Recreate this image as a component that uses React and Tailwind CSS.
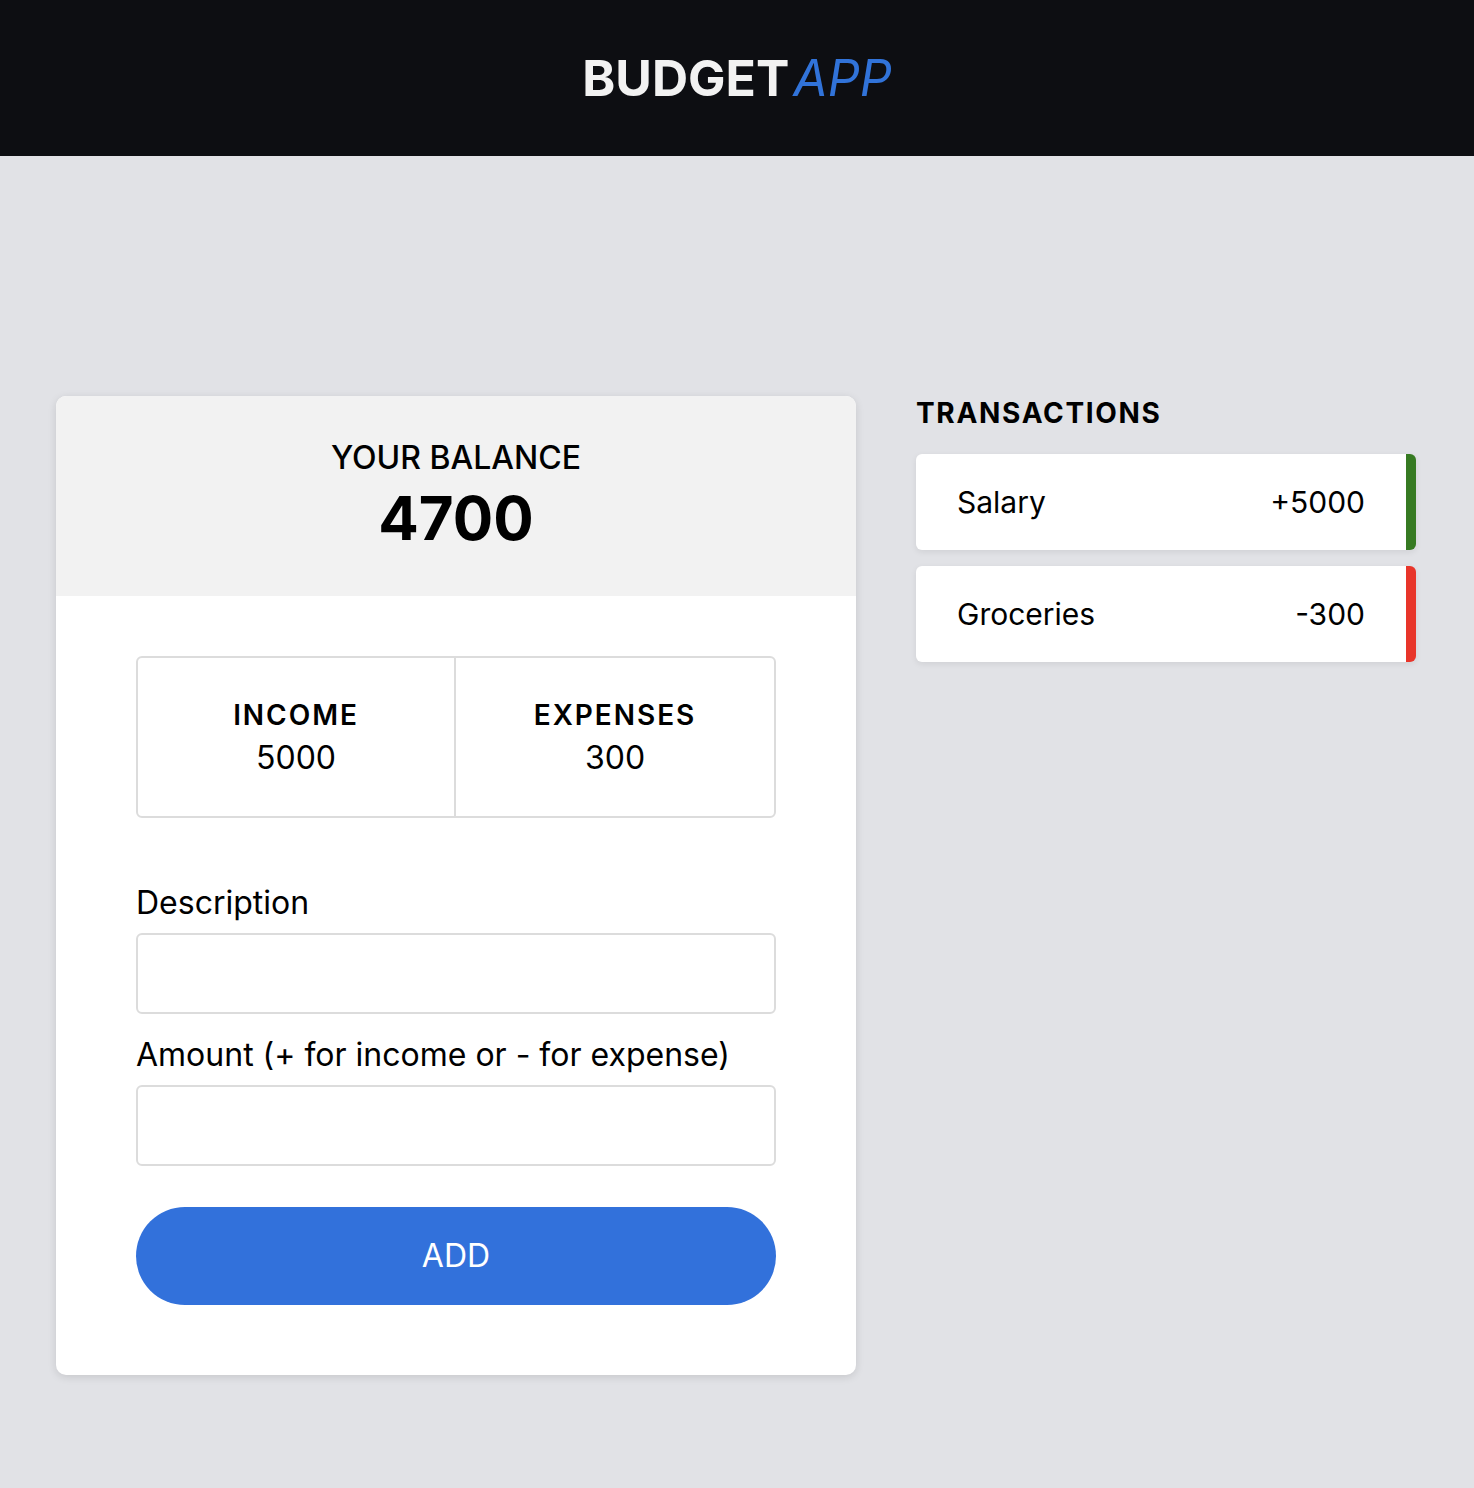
import React from "react";

const transactions = [
  { id: 1, text: "Salary", amount: 5000 },
  { id: 2, text: "Groceries", amount: -300 },
];

export default function App() {
  const income = transactions.filter((t) => t.amount > 0).reduce((s, t) => s + t.amount, 0);
  const expense = transactions.filter((t) => t.amount < 0).reduce((s, t) => s - t.amount, 0);

  return (
    <div className="min-h-[1488px] bg-[#e1e2e6] text-black font-['Inter',sans-serif]">
      {/* Header */}
      <header className="h-[156px] bg-[#0d0e12] flex items-center justify-center">
        <h1 className="text-[50px] leading-none font-bold text-[#f2f2f2]">
          BUDGET<span className="ml-[4px] italic font-normal text-[#3173d9]">APP</span>
        </h1>
      </header>

      <main className="pl-[56px] pt-[240px] flex gap-[60px] items-start">
        {/* Balance card */}
        <div className="w-[800px] rounded-[10px] bg-white overflow-hidden shadow-[0_2px_8px_rgba(0,0,0,0.12)]">
          <div className="h-[200px] bg-[#f2f2f2] pt-[43px] text-center">
            <h2 className="text-[32px] leading-[38px] font-medium">YOUR BALANCE</h2>
            <p className="mt-[11px] text-[60px] leading-[60px] font-bold">{income - expense}</p>
          </div>

          <div className="px-[80px] pt-[60px] pb-[70px]">
            <div className="grid grid-cols-2 h-[162px] border-2 border-[#dcdcdc] rounded-[6px]">
              <div className="border-r-2 border-[#dcdcdc] text-center pt-[40px]">
                <h4 className="text-[28px] leading-[34px] font-semibold tracking-[0.07em]">INCOME</h4>
                <p className="mt-[7px] text-[32px] leading-[38px]">{income}</p>
              </div>
              <div className="text-center pt-[40px]">
                <h4 className="text-[28px] leading-[34px] font-semibold tracking-[0.07em]">EXPENSES</h4>
                <p className="mt-[7px] text-[32px] leading-[38px]">{expense}</p>
              </div>
            </div>

            <form onSubmit={(e) => e.preventDefault()}>
              <label className="block mt-[66px] text-[32px] leading-[38px]">Description</label>
              <input
                type="text"
                className="block w-full mt-[11px] h-[81px] border-2 border-[#dcdcdc] rounded-[6px] px-4 text-[28px] outline-none"
              />
              <label className="block mt-[22px] text-[32px] leading-[38px]">
                Amount (+ for income or - for expense)
              </label>
              <input
                type="number"
                className="block w-full mt-[11px] h-[81px] border-2 border-[#dcdcdc] rounded-[6px] px-4 text-[28px] outline-none"
              />
              <button
                type="submit"
                className="block w-full mt-[41px] h-[98px] rounded-full bg-[#3271db] text-white text-[32px]"
              >
                ADD
              </button>
            </form>
          </div>
        </div>

        {/* Transactions */}
        <div className="w-[500px]">
          <h3 className="text-[28px] leading-[34px] font-bold tracking-[0.06em]">TRANSACTIONS</h3>
          <ul className="mt-[24px] flex flex-col gap-[16px]">
            {transactions.map((t) => (
              <li
                key={t.id}
                className={`h-[96px] bg-white rounded-[6px] border-r-[10px] ${
                  t.amount > 0 ? "border-[#367a22]" : "border-[#e8352a]"
                } flex items-center justify-between pl-[41px] pr-[41px] text-[30px] shadow-[0_2px_6px_rgba(0,0,0,0.08)]`}
              >
                <span>{t.text}</span>
                <span>{t.amount > 0 ? `+${t.amount}` : t.amount}</span>
              </li>
            ))}
          </ul>
        </div>
      </main>
    </div>
  );
}
